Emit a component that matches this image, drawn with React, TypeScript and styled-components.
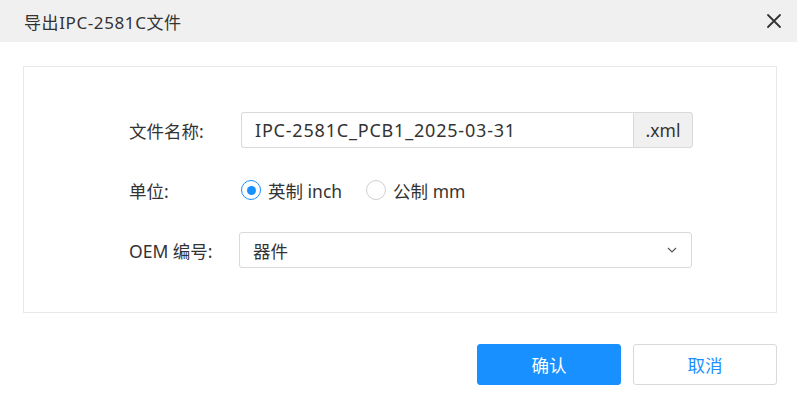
import React from "react";
import styled, { createGlobalStyle } from "styled-components";

const Global = createGlobalStyle`
  html, body { margin: 0; padding: 0; background: #fff; }
  body {
    font-family: "Noto Sans", "Noto Sans CJK SC", sans-serif;
    color: #333;
  }
  * { box-sizing: border-box; }
`;

const Dialog = styled.div`
  width: 797px;
  height: 409px;
  background: #fff;
  display: flex;
  flex-direction: column;
  position: relative;
  overflow: hidden;
`;

const Header = styled.div`
  height: 42px;
  background: #f0f0f0;
  display: flex;
  align-items: center;
  justify-content: space-between;
  padding: 0 14px 0 24px;
`;

const Title = styled.div`
  font-size: 17px;
  letter-spacing: 0.6px;
  color: #333;
`;

const CloseBtn = styled.button`
  border: none;
  background: transparent;
  padding: 0;
  width: 18px;
  height: 18px;
  display: flex;
  align-items: center;
  justify-content: center;
  cursor: pointer;
`;

const Body = styled.div`
  padding: 24px 20px 0 23px;
`;

const Panel = styled.div`
  border: 1px solid #e8e8e8;
  height: 247px;
  padding: 45px 0 0 105px;
`;

const FormGrid = styled.div`
  display: grid;
  grid-template-columns: 112px 452px;
  grid-auto-rows: 36px;
  row-gap: 24px;
  align-items: center;
`;

const Label = styled.div`
  font-size: 17.5px;
  color: #333;
`;

const InputGroup = styled.div`
  display: flex;
  height: 36px;
`;

const TextInput = styled.div`
  flex: 1;
  border: 1px solid #d9d9d9;
  border-right: none;
  border-radius: 3px 0 0 3px;
  display: flex;
  align-items: center;
  padding-left: 13px;
  font-size: 18px;
  letter-spacing: 0.8px;
  color: #333;
`;

const Addon = styled.div`
  width: 60px;
  background: #f0f0f0;
  border: 1px solid #d9d9d9;
  border-radius: 0 3px 3px 0;
  display: flex;
  align-items: center;
  justify-content: center;
  font-size: 17.5px;
  color: #333;
`;

const RadioGroup = styled.div`
  display: flex;
  align-items: center;
  gap: 24px;
`;

const RadioItem = styled.label`
  display: flex;
  align-items: center;
  gap: 7px;
  font-size: 17.5px;
  color: #333;
  cursor: pointer;
`;

const RadioCircle = styled.span<{ $checked?: boolean }>`
  width: 20px;
  height: 20px;
  border-radius: 50%;
  border: 1.5px solid ${(p) => (p.$checked ? "#1890ff" : "#cfcfcf")};
  display: flex;
  align-items: center;
  justify-content: center;
  &::after {
    content: "";
    width: 9px;
    height: 9px;
    border-radius: 50%;
    background: ${(p) => (p.$checked ? "#1890ff" : "transparent")};
  }
`;

const Select = styled.div`
  height: 36px;
  margin-left: -2px;
  margin-right: 1px;
  border: 1px solid #d9d9d9;
  border-radius: 3px;
  display: flex;
  align-items: center;
  justify-content: space-between;
  padding: 0 14px 0 13px;
  font-size: 17.5px;
  color: #333;
`;

const Footer = styled.div`
  display: flex;
  justify-content: flex-end;
  gap: 12px;
  padding: 31px 20px 0 0;
`;

const Button = styled.button<{ $primary?: boolean }>`
  width: 144px;
  height: 41px;
  border-radius: 3px;
  font-size: 17.5px;
  font-family: "Noto Sans CJK SC", sans-serif;
  cursor: pointer;
  border: 1px solid ${(p) => (p.$primary ? "#1890ff" : "#d9d9d9")};
  background: ${(p) => (p.$primary ? "#1890ff" : "#fff")};
  color: ${(p) => (p.$primary ? "#fff" : "#1890ff")};
`;

export default function App() {
  return (
    <>
      <Global />
      <Dialog>
        <Header>
          <Title>导出IPC-2581C文件</Title>
          <CloseBtn aria-label="close">
            <svg width="16" height="16" viewBox="0 0 16 16">
              <path d="M2 2 L14 14 M14 2 L2 14" stroke="#333" strokeWidth="1.8" strokeLinecap="round" />
            </svg>
          </CloseBtn>
        </Header>
        <Body>
          <Panel>
            <FormGrid>
              <Label>文件名称:</Label>
              <InputGroup>
                <TextInput>IPC-2581C_PCB1_2025-03-31</TextInput>
                <Addon>.xml</Addon>
              </InputGroup>
              <Label>单位:</Label>
              <RadioGroup>
                <RadioItem>
                  <RadioCircle $checked />
                  英制 inch
                </RadioItem>
                <RadioItem>
                  <RadioCircle />
                  公制 mm
                </RadioItem>
              </RadioGroup>
              <Label>OEM 编号:</Label>
              <Select>
                <span>器件</span>
                <svg width="10" height="6" viewBox="0 0 10 6">
                  <path d="M1 1 L5 5 L9 1" stroke="#555" strokeWidth="1.2" fill="none" />
                </svg>
              </Select>
            </FormGrid>
          </Panel>
        </Body>
        <Footer>
          <Button $primary>确认</Button>
          <Button>取消</Button>
        </Footer>
      </Dialog>
    </>
  );
}
